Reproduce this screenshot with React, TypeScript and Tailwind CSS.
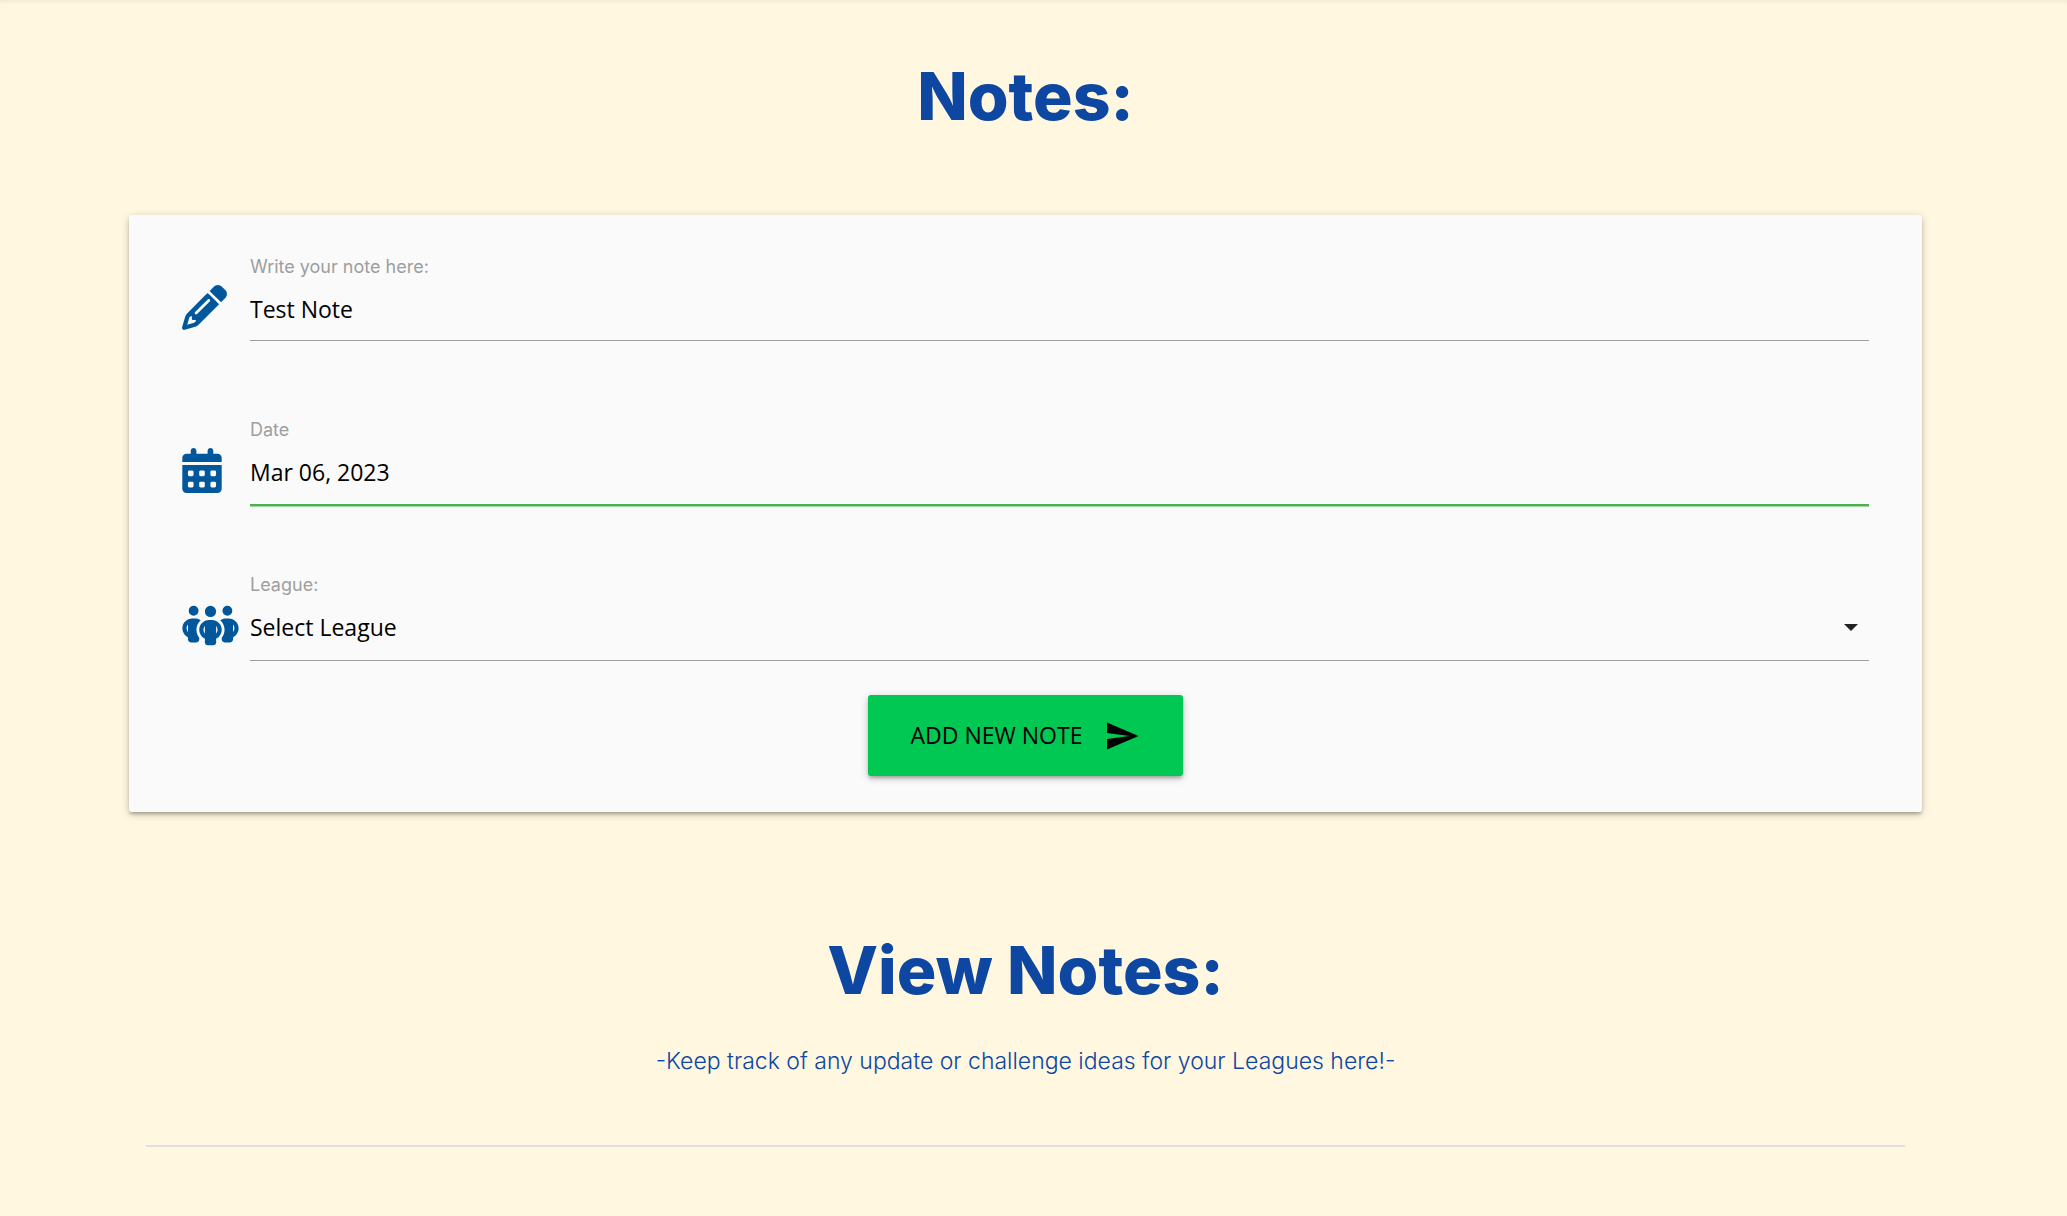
import { useState, type ReactNode } from "react";
import { FaCalendarDays, FaPencil, FaPeopleGroup } from "react-icons/fa6";
import { MdSend } from "react-icons/md";

const inputClass =
  "w-full appearance-none rounded-none bg-transparent pb-[2px] font-['Open_Sans',sans-serif] text-[23px] text-black outline-none";

function Field({ id, label, icon, children }: { id: string; label: string; icon: ReactNode; children: ReactNode }) {
  return (
    <div className="flex items-start">
      <div className="flex w-[68px] shrink-0 pt-[30px] text-[45px] text-[#01579b]">{icon}</div>
      <div className="min-w-0 flex-1">
        <label htmlFor={id} className="block text-lg leading-6 text-[#9e9e9e]">
          {label}
        </label>
        {children}
      </div>
    </div>
  );
}

function Heading({ children }: { children: ReactNode }) {
  return <h1 className="text-center text-[66px] leading-[72px] font-extrabold text-[#0d47a1]">{children}</h1>;
}

export default function App() {
  const [note, setNote] = useState("Test Note");
  const [date, setDate] = useState("Mar 06, 2023");

  return (
    <main className="min-h-screen bg-[#fff7e0] pr-4 pb-16 font-[Inter,sans-serif] shadow-[inset_0_5px_5px_-4px_rgba(0,0,0,0.08)]">
      <div className="px-[129px] pt-[60px]">
        <Heading>Notes:</Heading>

        <form
          onSubmit={(e) => e.preventDefault()}
          className="mt-[83px] rounded-[3px] bg-[#fafafa] px-[53px] pt-10 pb-9 shadow-[0_3px_3px_0_rgba(0,0,0,0.14),0_4px_2px_-3px_rgba(0,0,0,0.12),0_2px_8px_0_rgba(0,0,0,0.2)]"
        >
          <Field id="note" label="Write your note here:" icon={<FaPencil />}>
            <input id="note" value={note} onChange={(e) => setNote(e.target.value)} className={`${inputClass} h-[62px] border-b border-[#9e9e9e]`} />
          </Field>
          <div className="mt-[77px]">
            <Field id="date" label="Date" icon={<FaCalendarDays className="w-10" />}>
              <input
                id="date"
                value={date}
                onChange={(e) => setDate(e.target.value)}
                className={`${inputClass} h-16 border-b-2 border-[#4caf50] shadow-[0_1px_0_0_#a5d6a7]`}
              />
            </Field>
          </div>
          <div className="mt-[67px]">
            <Field id="league" label="League:" icon={<FaPeopleGroup className="w-[57px] shrink-0" />}>
              <div className="relative">
                <select id="league" defaultValue="" className={`${inputClass} h-16 border-b border-[#9e9e9e]`}>
                  <option value="">Select League</option>
                </select>
                <svg viewBox="0 0 14 7" className="pointer-events-none absolute top-[27px] right-[11px] h-[7px] w-[14px]" aria-hidden="true">
                  <path d="M0 0h14L7 7z" fill="#212121" />
                </svg>
              </div>
            </Field>
          </div>
          <button
            type="submit"
            className="mx-auto mt-[34px] flex h-[81px] w-[315px] items-center justify-center gap-[22px] rounded-[3px] bg-[#00c853] font-['Open_Sans',sans-serif] text-[23px] text-black shadow-[0_3px_3px_0_rgba(0,0,0,0.14),0_4px_2px_-3px_rgba(0,0,0,0.12),0_2px_8px_0_rgba(0,0,0,0.2)]"
          >
            ADD NEW NOTE
            <MdSend className="size-9" />
          </button>
        </form>

        <section className="mt-[122px] px-[17px]">
          <Heading>View Notes:</Heading>
          <p className="mt-[39px] text-center text-[23px] leading-8 font-light text-[#0d47a1]">
            -Keep track of any update or challenge ideas for your Leagues here!-
          </p>
          <hr className="mt-[68px] border-t-2 border-[#e0e0e0]" />
        </section>
      </div>
    </main>
  );
}
